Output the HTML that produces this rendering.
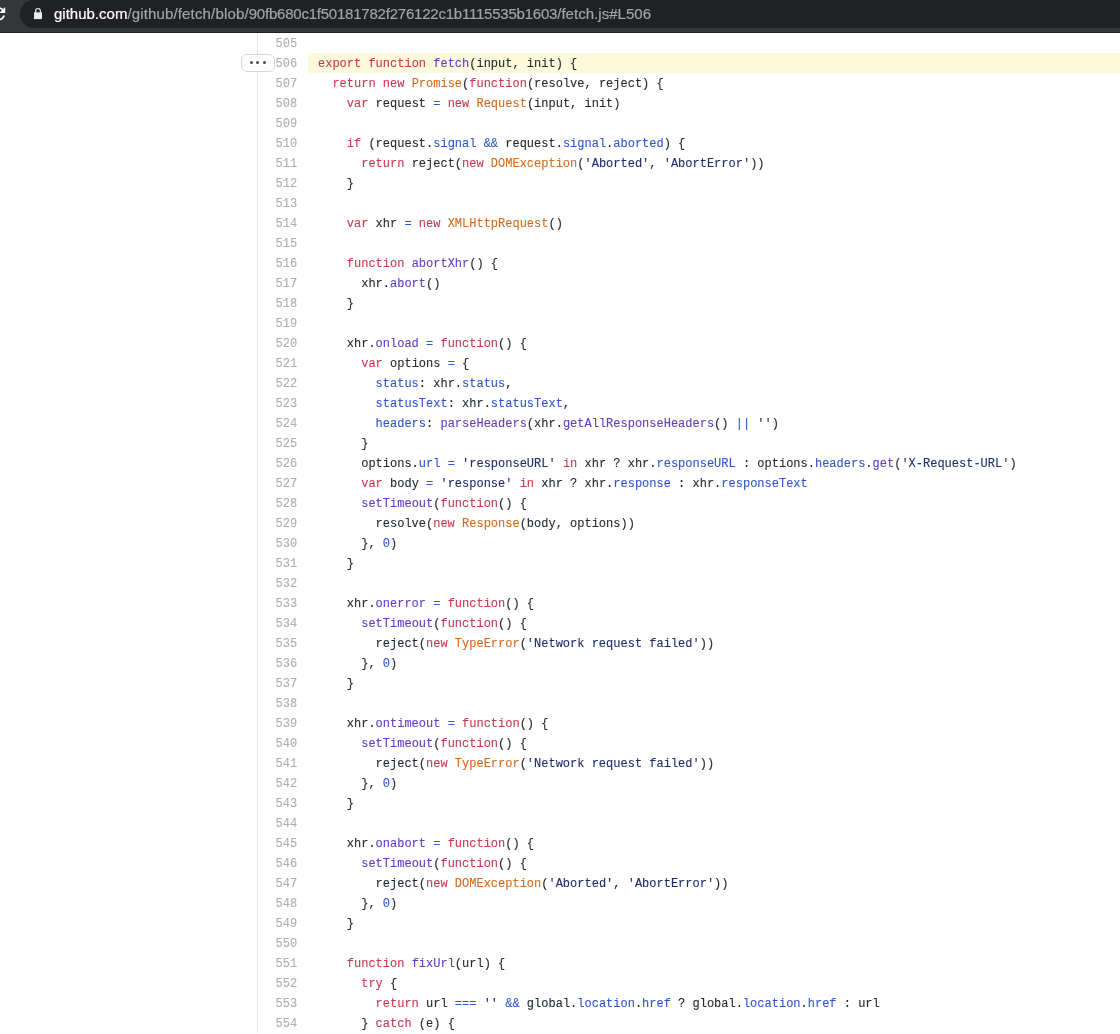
<!DOCTYPE html>
<html><head><meta charset="utf-8">
<style>
*{margin:0;padding:0;box-sizing:border-box}
html,body{width:1120px;height:1034px;overflow:hidden;background:#fff}
body{position:relative;font-family:"Liberation Sans",sans-serif}
#bar{position:absolute;left:0;top:0;width:1120px;height:33px;background:#35363a;border-bottom:1px solid #1f1f21}
#pill{position:absolute;left:20.3px;top:0;width:1200px;height:28px;border-radius:14px;background:#202124}
#url{will-change:transform;position:absolute;left:54px;top:5px;font-size:15px;line-height:18px;color:#a2a4a8;white-space:pre;-webkit-text-stroke:0.2px currentColor}
#url b{font-weight:normal;color:#fff}
#u2{letter-spacing:0.153px}#u3{letter-spacing:-0.22px}#u4{letter-spacing:0.04px}
#lock{position:absolute;left:34px;top:7px}
#reload{position:absolute;left:0;top:0}
#code{will-change:transform;position:absolute;left:257px;top:33px;width:863px;border-left:1px solid #e3e3e4;font-family:"Liberation Mono",monospace;font-size:12px;line-height:20px;color:#24292e;-webkit-text-stroke:0.1px currentColor}
.r{height:20px;white-space:pre;position:relative}
.n{position:relative;top:1px}
.n{display:inline-block;width:50px;padding-right:10.8px;text-align:right;color:#acaeb1}
.c{position:absolute;left:50px;top:0;right:0;height:20px;padding-left:10px;padding-top:1px}
.hl .c{background:#fbfbdc}
.k{color:#cc3750}.en{color:#623ec6}.v{color:#d46a1c}.c1{color:#2f55cf}.s{color:#1d2c6c}
#dots{position:absolute;left:241px;top:54px;width:34px;height:18px;border:1px solid #d6d6d8;border-radius:6px;background:#fff}
#dots i{position:absolute;top:6px;width:3px;height:3px;border-radius:50%;background:#4d4e55}
</style></head><body>
<div id="bar"><div id="pill"></div>
<svg id="reload" width="8" height="24" viewBox="0 0 8 24"><path transform="translate(-11.94 3.57) scale(0.857)" d="M17.65 6.35C16.2 4.9 14.21 4 12 4c-4.42 0-7.99 3.58-7.99 8s3.57 8 7.99 8c3.730 0 6.84-2.55 7.73-6h-2.08c-.82 2.33-3.04 4-5.65 4-3.31 0-6-2.69-6-6s2.69-6 6-6c1.66 0 3.14.69 4.22 1.78L13 11h7V4l-2.35 2.35z" fill="#fff"/></svg>
<svg id="lock" width="8" height="13" viewBox="0 0 8 13"><path d="M1.6 5.8 V3.9 A2.4 2.4 0 0 1 6.4 3.9 V5.8" fill="none" stroke="#e8eaed" stroke-width="1.2"/><rect x="0" y="5.3" width="8" height="6.8" fill="#e8eaed"/></svg>
<div id="url"><b id="u1">github.com</b><span id="u2">/github/fetch/blob/</span><span id="u3">90fb680c1f50181782f276122c1b1115535b1603</span><span id="u4">/fetch.js#L506</span></div>
</div>
<div id="code">
<div class="r"><span class="n">505</span><span class="c"></span></div>
<div class="r hl"><span class="n">506</span><span class="c"><span class="k">export</span> <span class="k">function</span> <span class="en">fetch</span>(input, init) {</span></div>
<div class="r"><span class="n">507</span><span class="c">  <span class="k">return</span> <span class="k">new</span> <span class="v">Promise</span>(<span class="k">function</span>(resolve, reject) {</span></div>
<div class="r"><span class="n">508</span><span class="c">    <span class="k">var</span> request <span class="c1">=</span> <span class="k">new</span> <span class="v">Request</span>(input, init)</span></div>
<div class="r"><span class="n">509</span><span class="c"></span></div>
<div class="r"><span class="n">510</span><span class="c">    <span class="k">if</span> (request.<span class="c1">signal</span> <span class="c1">&amp;&amp;</span> request.<span class="c1">signal</span>.<span class="c1">aborted</span>) {</span></div>
<div class="r"><span class="n">511</span><span class="c">      <span class="k">return</span> reject(<span class="k">new</span> <span class="v">DOMException</span>(<span class="s">'Aborted'</span>, <span class="s">'AbortError'</span>))</span></div>
<div class="r"><span class="n">512</span><span class="c">    }</span></div>
<div class="r"><span class="n">513</span><span class="c"></span></div>
<div class="r"><span class="n">514</span><span class="c">    <span class="k">var</span> xhr <span class="c1">=</span> <span class="k">new</span> <span class="v">XMLHttpRequest</span>()</span></div>
<div class="r"><span class="n">515</span><span class="c"></span></div>
<div class="r"><span class="n">516</span><span class="c">    <span class="k">function</span> <span class="en">abortXhr</span>() {</span></div>
<div class="r"><span class="n">517</span><span class="c">      xhr.<span class="en">abort</span>()</span></div>
<div class="r"><span class="n">518</span><span class="c">    }</span></div>
<div class="r"><span class="n">519</span><span class="c"></span></div>
<div class="r"><span class="n">520</span><span class="c">    xhr.<span class="en">onload</span> <span class="c1">=</span> <span class="k">function</span>() {</span></div>
<div class="r"><span class="n">521</span><span class="c">      <span class="k">var</span> options <span class="c1">=</span> {</span></div>
<div class="r"><span class="n">522</span><span class="c">        <span class="c1">status</span>: xhr.<span class="c1">status</span>,</span></div>
<div class="r"><span class="n">523</span><span class="c">        <span class="c1">statusText</span>: xhr.<span class="c1">statusText</span>,</span></div>
<div class="r"><span class="n">524</span><span class="c">        <span class="c1">headers</span>: <span class="en">parseHeaders</span>(xhr.<span class="en">getAllResponseHeaders</span>() <span class="c1">||</span> <span class="s">''</span>)</span></div>
<div class="r"><span class="n">525</span><span class="c">      }</span></div>
<div class="r"><span class="n">526</span><span class="c">      options.<span class="c1">url</span> <span class="c1">=</span> <span class="s">'responseURL'</span> <span class="k">in</span> xhr ? xhr.<span class="c1">responseURL</span> : options.<span class="c1">headers</span>.<span class="en">get</span>(<span class="s">'X-Request-URL'</span>)</span></div>
<div class="r"><span class="n">527</span><span class="c">      <span class="k">var</span> body <span class="c1">=</span> <span class="s">'response'</span> <span class="k">in</span> xhr ? xhr.<span class="c1">response</span> : xhr.<span class="c1">responseText</span></span></div>
<div class="r"><span class="n">528</span><span class="c">      <span class="en">setTimeout</span>(<span class="k">function</span>() {</span></div>
<div class="r"><span class="n">529</span><span class="c">        resolve(<span class="k">new</span> <span class="v">Response</span>(body, options))</span></div>
<div class="r"><span class="n">530</span><span class="c">      }, <span class="c1">0</span>)</span></div>
<div class="r"><span class="n">531</span><span class="c">    }</span></div>
<div class="r"><span class="n">532</span><span class="c"></span></div>
<div class="r"><span class="n">533</span><span class="c">    xhr.<span class="en">onerror</span> <span class="c1">=</span> <span class="k">function</span>() {</span></div>
<div class="r"><span class="n">534</span><span class="c">      <span class="en">setTimeout</span>(<span class="k">function</span>() {</span></div>
<div class="r"><span class="n">535</span><span class="c">        reject(<span class="k">new</span> <span class="v">TypeError</span>(<span class="s">'Network request failed'</span>))</span></div>
<div class="r"><span class="n">536</span><span class="c">      }, <span class="c1">0</span>)</span></div>
<div class="r"><span class="n">537</span><span class="c">    }</span></div>
<div class="r"><span class="n">538</span><span class="c"></span></div>
<div class="r"><span class="n">539</span><span class="c">    xhr.<span class="en">ontimeout</span> <span class="c1">=</span> <span class="k">function</span>() {</span></div>
<div class="r"><span class="n">540</span><span class="c">      <span class="en">setTimeout</span>(<span class="k">function</span>() {</span></div>
<div class="r"><span class="n">541</span><span class="c">        reject(<span class="k">new</span> <span class="v">TypeError</span>(<span class="s">'Network request failed'</span>))</span></div>
<div class="r"><span class="n">542</span><span class="c">      }, <span class="c1">0</span>)</span></div>
<div class="r"><span class="n">543</span><span class="c">    }</span></div>
<div class="r"><span class="n">544</span><span class="c"></span></div>
<div class="r"><span class="n">545</span><span class="c">    xhr.<span class="en">onabort</span> <span class="c1">=</span> <span class="k">function</span>() {</span></div>
<div class="r"><span class="n">546</span><span class="c">      <span class="en">setTimeout</span>(<span class="k">function</span>() {</span></div>
<div class="r"><span class="n">547</span><span class="c">        reject(<span class="k">new</span> <span class="v">DOMException</span>(<span class="s">'Aborted'</span>, <span class="s">'AbortError'</span>))</span></div>
<div class="r"><span class="n">548</span><span class="c">      }, <span class="c1">0</span>)</span></div>
<div class="r"><span class="n">549</span><span class="c">    }</span></div>
<div class="r"><span class="n">550</span><span class="c"></span></div>
<div class="r"><span class="n">551</span><span class="c">    <span class="k">function</span> <span class="en">fixUrl</span>(url) {</span></div>
<div class="r"><span class="n">552</span><span class="c">      <span class="k">try</span> {</span></div>
<div class="r"><span class="n">553</span><span class="c">        <span class="k">return</span> url <span class="c1">===</span> <span class="s">''</span> <span class="c1">&amp;&amp;</span> global.<span class="c1">location</span>.<span class="c1">href</span> ? global.<span class="c1">location</span>.<span class="c1">href</span> : url</span></div>
<div class="r"><span class="n">554</span><span class="c">      } <span class="k">catch</span> (e) {</span></div>
</div>
<div id="dots"><i style="left:7.8px"></i><i style="left:14.4px"></i><i style="left:21px"></i></div>
</body></html>
